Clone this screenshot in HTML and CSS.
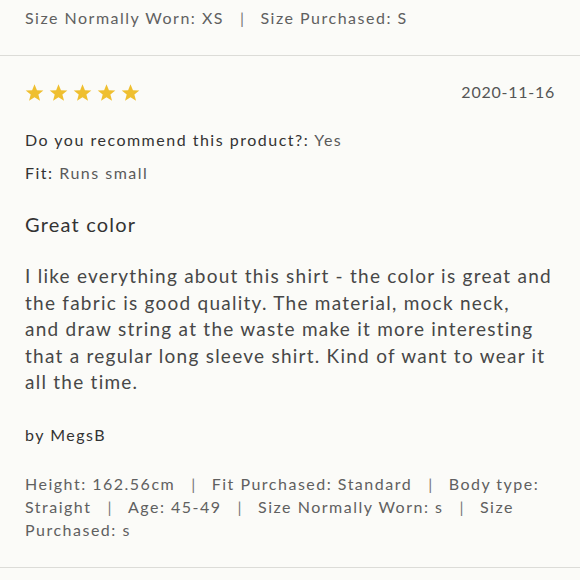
FILE: index.html
```html
<!DOCTYPE html>
<html>
<head>
<meta charset="utf-8">
<link rel="stylesheet" href="styles.css">
</head>
<body>
<div class="review prev">
  <div class="meta">Size Normally Worn: XS<span class="sep">|</span>Size Purchased: S</div>
</div>
<div class="review">
  <div class="head">
    <div class="stars">
      <svg viewBox="0 0 24 24"><path d="M12 1.5l3.1 7.6 8.1.4-6.3 5.1 2.1 7.9L12 18l-6.9 4.5 2.1-7.9L.9 9.5 9 9.1z"/></svg>
      <svg viewBox="0 0 24 24"><path d="M12 1.5l3.1 7.6 8.1.4-6.3 5.1 2.1 7.9L12 18l-6.9 4.5 2.1-7.9L.9 9.5 9 9.1z"/></svg>
      <svg viewBox="0 0 24 24"><path d="M12 1.5l3.1 7.6 8.1.4-6.3 5.1 2.1 7.9L12 18l-6.9 4.5 2.1-7.9L.9 9.5 9 9.1z"/></svg>
      <svg viewBox="0 0 24 24"><path d="M12 1.5l3.1 7.6 8.1.4-6.3 5.1 2.1 7.9L12 18l-6.9 4.5 2.1-7.9L.9 9.5 9 9.1z"/></svg>
      <svg viewBox="0 0 24 24"><path d="M12 1.5l3.1 7.6 8.1.4-6.3 5.1 2.1 7.9L12 18l-6.9 4.5 2.1-7.9L.9 9.5 9 9.1z"/></svg>
    </div>
    <div class="date">2020-11-16</div>
  </div>
  <div class="attr recommend"><span class="label">Do you recommend this product?:</span> <span class="value">Yes</span></div>
  <div class="attr fit"><span class="label">Fit:</span> <span class="value">Runs small</span></div>
  <div class="title">Great color</div>
  <p class="body">I like everything about this shirt - the color is great and<br>the fabric is good quality. The material, mock neck,<br>and draw string at the waste make it more interesting<br>that a regular long sleeve shirt. Kind of want to wear it<br>all the time.</p>
  <div class="author">by MegsB</div>
  <div class="meta details">Height: 162.56cm<span class="sep">|</span>Fit Purchased: Standard<span class="sep">|</span>Body type: Straight<span class="sep">|</span>Age: 45-49<span class="sep">|</span>Size Normally Worn: s<span class="sep">|</span>Size Purchased: s</div>
</div>
</body>
</html>
```

FILE: styles.css
```css
html, body {
  margin: 0;
  padding: 0;
  background: #fbfbf8;
}
body {
  font-family: Lato, "Liberation Sans", sans-serif;
  color: #555;
  letter-spacing: 1.5px;
}
.review {
  padding: 0 25px 26px 25px;
  border-bottom: 1px solid #dcdcd8;
}
.prev {
  padding-top: 6px;
  padding-bottom: 25px;
}
.meta {
  font-size: 16px;
  line-height: 24px;
  color: #606060;
}
.sep {
  margin: 0 15px 0 16px;
  color: #777;
}
.head {
  display: flex;
  justify-content: space-between;
  align-items: center;
  height: 18px;
  padding-top: 27px;
}
.stars {
  display: flex;
  gap: 5px;
}
.stars svg {
  width: 19px;
  height: 19px;
  fill: #efbf2f;
}
.date {
  font-size: 16px;
  line-height: 18px;
  color: #555;
  letter-spacing: 0.75px;
}
.attr {
  font-size: 16px;
  line-height: 24px;
}
.recommend { margin-top: 27px; }
.fit { margin-top: 9px; }
.label { color: #333; }
.value { color: #5a5a5a; }
.title {
  font-size: 20px;
  line-height: 28px;
  color: #333;
  margin-top: 25px;
  letter-spacing: 1.2px;
}
.body {
  font-size: 19px;
  line-height: 26.6px;
  color: #474747;
  margin: 25px 0 0;
  letter-spacing: 1.25px;
  white-space: nowrap;
}
.author {
  font-size: 16px;
  line-height: 24px;
  color: #333;
  margin-top: 27px;
}
.details {
  line-height: 22.8px;
  margin-top: 26px;
}
```
